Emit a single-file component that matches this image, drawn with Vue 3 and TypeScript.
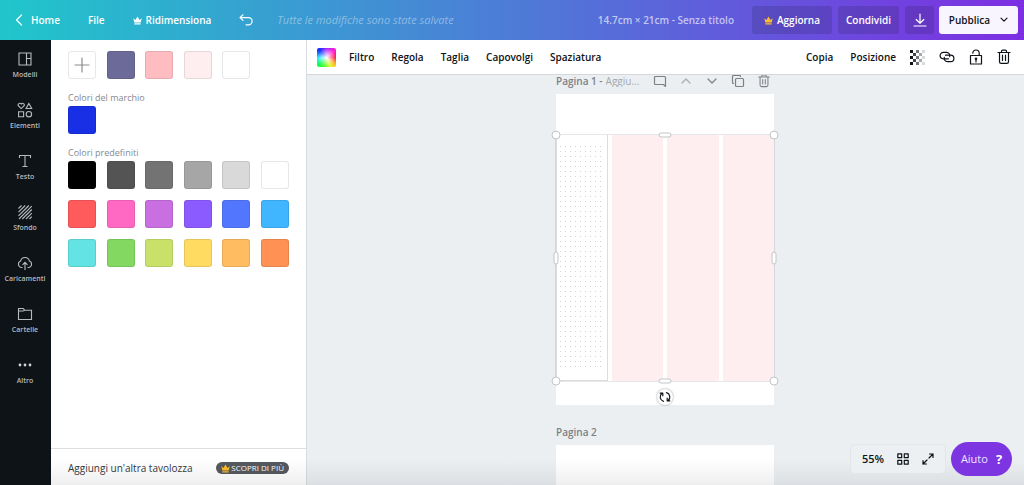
<script setup lang="ts">
interface NavItem {
  label: string
  icon: string
}

const navItems: NavItem[] = [
  { label: 'Modelli', icon: 'layout' },
  { label: 'Elementi', icon: 'shapes' },
  { label: 'Testo', icon: 'text' },
  { label: 'Sfondo', icon: 'stripes' },
  { label: 'Caricamenti', icon: 'cloud' },
  { label: 'Cartelle', icon: 'folder' },
  { label: 'Altro', icon: 'more' },
]

const documentColors: string[] = ['#6c6a98', '#ffbcc1', '#ffeeef', '#ffffff']
const brandColors: string[] = ['#182fe6']
const defaultColors: string[] = [
  '#000000', '#545454', '#737373', '#a6a6a6', '#d9d9d9', '#ffffff',
  '#ff5a5c', '#ff68c3', '#ca6fe2', '#8c5bff', '#5376ff', '#3fb6ff',
  '#64e3e5', '#82d860', '#c9e169', '#ffdb62', '#ffbc60', '#ff9155',
]

const imageTools: string[] = ['Filtro', 'Regola', 'Taglia', 'Capovolgi', 'Spaziatura']
const handles: string[] = ['nw', 'ne', 'sw', 'se', 'n', 's', 'w', 'e']

const checker: { x: number; y: number; o: number }[] = []
for (let row = 0; row < 5; row++) {
  for (let col = 0; col < 5; col++) {
    if ((row + col) % 2 === 0) checker.push({ x: col * 3, y: row * 3, o: 1 - col * 0.21 })
  }
}
</script>

<template>
  <div class="app">
    <header class="topbar">
      <a class="home" href="#">
        <svg width="8" height="12" viewBox="0 0 8 12"><path d="M6.5 1 1.5 6l5 5" class="line" /></svg>
        Home
      </a>
      <button class="file">File</button>
      <button class="resize">
        <svg width="9" height="9" viewBox="0 0 9 9"><path d="M.3 2.2 2.5 4 4.5.5 6.5 4l2.2-1.8-1 4.3H1.3zM1.4 7.2h6.2v1.3H1.4z" fill="currentColor" /></svg>
        Ridimensiona
      </button>
      <button class="undo" aria-label="Annulla">
        <svg width="14" height="12" viewBox="0 0 14 12"><path d="M4 .8 1 3.6l3 2.8M1.2 3.6h8.3a3.6 3.6 0 0 1 0 7.2H7" class="line" /></svg>
      </button>
      <span class="saved">Tutte le modifiche sono state salvate</span>
      <button class="doc-title">14.7cm × 21cm - Senza titolo</button>
      <button class="action upgrade">
        <svg width="9" height="9" viewBox="0 0 9 9"><path d="M.3 2.2 2.5 4 4.5.5 6.5 4l2.2-1.8-1 4.3H1.3zM1.4 7.2h6.2v1.3H1.4z" fill="#fdbc2c" /></svg>
        Aggiorna
      </button>
      <button class="action share">Condividi</button>
      <button class="action download" aria-label="Scarica">
        <svg width="14" height="14" viewBox="0 0 14 14"><path d="M7 1v9M3.2 6.5 7 10.2l3.8-3.7M1 13h12" class="line" /></svg>
      </button>
      <button class="action publish">
        Pubblica
        <svg width="8" height="6" viewBox="0 0 8 6"><path d="m1 1.2 3 3 3-3" class="line" /></svg>
      </button>
    </header>

    <div class="body">
      <nav class="rail">
        <button v-for="item in navItems" :key="item.label" class="rail-item">
          <svg width="16" height="16" viewBox="0 0 16 16" class="rail-icon">
            <path v-if="item.icon === 'layout'" d="M2 2h12v12H2zM9.5 2v12M9.5 7.5H14" />
            <template v-else-if="item.icon === 'shapes'">
              <path d="M4.2 6.6 1.5 4A1.6 1.6 0 0 1 4.2 2a1.6 1.6 0 0 1 2.7 2zM11.9 1.5l2.8 5H9.1zM1.6 9.7h5v5h-5z" />
              <circle cx="11.9" cy="12.2" r="2.7" />
            </template>
            <path v-else-if="item.icon === 'text'" d="M2.5 5V2.5h11V5M8 2.5v11M5.5 13.5h5" />
            <path v-else-if="item.icon === 'stripes'" d="M1.5 4.5l3-3M1.5 8.2l6.7-6.7M1.5 11.9 11.9 1.5M2 15 14.8 2.2M5.3 15l9.5-9.5M9 15l5.8-5.8M12.5 15l2.3-2.3" />
            <path v-else-if="item.icon === 'cloud'" d="M5.5 12.5H4.2A3.4 3.4 0 0 1 3.6 6a4.5 4.5 0 0 1 8.8 0 3.4 3.4 0 0 1-.6 6.5h-1.3M8 15V7.5M5.5 9.8 8 7.3l2.5 2.5" />
            <path v-else-if="item.icon === 'folder'" d="M1.5 13.5v-11h4.8l1.3 1.7h6.9v9.3zM1.5 5h4.8l1.3-.8" />
            <g v-else class="dots">
              <circle cx="3" cy="8" r="1.4" /><circle cx="8" cy="8" r="1.4" /><circle cx="13" cy="8" r="1.4" />
            </g>
          </svg>
          <span>{{ item.label }}</span>
        </button>
      </nav>

      <aside class="panel">
        <div class="palettes">
          <div class="swatches">
            <button class="swatch add" aria-label="Aggiungi colore">
              <svg width="16" height="16" viewBox="0 0 16 16"><path d="M8 1v14M1 8h14" class="line" /></svg>
            </button>
            <button v-for="c in documentColors" :key="c" class="swatch" :style="{ backgroundColor: c }" :aria-label="c"></button>
          </div>
          <h2>Colori del marchio</h2>
          <div class="swatches">
            <button v-for="c in brandColors" :key="c" class="swatch" :style="{ backgroundColor: c }" :aria-label="c"></button>
          </div>
          <h2>Colori predefiniti</h2>
          <div class="swatches">
            <button v-for="c in defaultColors" :key="c" class="swatch" :style="{ backgroundColor: c }" :aria-label="c"></button>
          </div>
        </div>
        <footer class="panel-footer">
          <span>Aggiungi un'altra tavolozza</span>
          <button class="pill">
            <svg width="9" height="9" viewBox="0 0 9 9"><path d="M.3 2.2 2.5 4 4.5.5 6.5 4l2.2-1.8-1 4.3H1.3zM1.4 7.2h6.2v1.3H1.4z" fill="#fdbc2c" /></svg>
            SCOPRI DI PIÙ
          </button>
        </footer>
      </aside>

      <main class="workspace">
        <div class="toolbar">
          <button class="color-picker" aria-label="Colore"></button>
          <button v-for="tool in imageTools" :key="tool">{{ tool }}</button>
          <span class="spacer"></span>
          <button>Copia</button>
          <button>Posizione</button>
          <div class="tool-icons">
            <button aria-label="Trasparenza">
              <svg width="15" height="15" viewBox="0 0 15 15"><rect v-for="(s, i) in checker" :key="i" :x="s.x" :y="s.y" width="3" height="3" fill="#0e1318" :opacity="s.o" /></svg>
            </button>
            <button aria-label="Link">
              <svg width="16" height="12" viewBox="0 0 16 12"><path d="M9.5 7.8H4.3a3.2 3.2 0 0 1 0-6.4h3.4a3.2 3.2 0 0 1 3 4.2M6.5 4.2h5.2a3.2 3.2 0 0 1 0 6.4H8.3a3.2 3.2 0 0 1-3-4.2" class="line" /></svg>
            </button>
            <button aria-label="Blocca">
              <svg width="14" height="16" viewBox="0 0 14 16"><path d="M1.5 6.5h11V15h-11zM3.8 4.2a3.2 3.2 0 0 1 6.4 0v2.3M7 10v3" class="line" /><circle cx="7" cy="9.8" r="1.3" fill="currentColor" /></svg>
            </button>
            <button aria-label="Elimina">
              <svg width="14" height="16" viewBox="0 0 14 16"><path d="M1 3.5h12M4.5 3.2v-.9c0-.7.5-1.2 1.2-1.2h2.6c.7 0 1.2.5 1.2 1.2v.9M2.5 3.7v9c0 1 .7 1.7 1.7 1.7h5.6c1 0 1.7-.7 1.7-1.7v-9M5.5 6.2v5.3M8.5 6.2v5.3" class="line" /></svg>
            </button>
          </div>
        </div>

        <div class="canvas">
          <section class="page-block">
            <div class="page-head">
              <label for="page-title">Pagina 1 -</label>
              <input id="page-title" type="text" placeholder="Aggiu..." />
              <div class="page-tools">
                <button aria-label="Commenta">
                  <svg width="14" height="14" viewBox="0 0 14 14"><path d="M2.500 2.500h9a1 1 0 0 1 1 1v9l-2-2h-8a1 1 0 0 1-1-1v-6a1 1 0 0 1 1-1z" class="line" /></svg>
                </button>
                <button class="faded" aria-label="Sposta su">
                  <svg width="14" height="14" viewBox="0 0 14 14"><path d="m3 9 4-4 4 4" class="line" /></svg>
                </button>
                <button aria-label="Sposta giù">
                  <svg width="14" height="14" viewBox="0 0 14 14"><path d="m3 5 4 4 4-4" class="line" /></svg>
                </button>
                <button aria-label="Duplica pagina">
                  <svg width="14" height="14" viewBox="0 0 14 14"><path d="M5.500 4.500h6a1 1 0 0 1 1 1v6a1 1 0 0 1-1 1h-6a1 1 0 0 1-1-1v-6a1 1 0 0 1 1-1zM2.500 9.500a1 1 0 0 1-1-1v-6a1 1 0 0 1 1-1h6a1 1 0 0 1 1 1" class="line" /></svg>
                </button>
                <button aria-label="Elimina pagina">
                  <svg width="14" height="14" viewBox="0 0 14 16"><path d="M1 3.5h12M4.5 3.2v-.9c0-.7.5-1.2 1.2-1.2h2.6c.7 0 1.2.5 1.2 1.2v.9M2.5 3.7v9c0 1 .7 1.7 1.7 1.7h5.6c1 0 1.7-.7 1.7-1.7v-9M5.5 6.2v5.3M8.5 6.2v5.3" class="line" /></svg>
                </button>
              </div>
            </div>
            <div class="page first">
              <div class="selection">
                <div class="dotted"><div class="dot-grid"></div></div>
                <div class="stripe"></div>
                <div class="stripe"></div>
                <div class="stripe"></div>
                <span v-for="h in handles" :key="h" class="handle" :class="h"></span>
                <button class="rotate" aria-label="Ruota">
                  <svg width="12" height="12" viewBox="0 0 12 12"><path d="M4.5 10.3A4.5 4.5 0 0 1 2.8 2.500M1.2 2.2h2.6v2.6M7.5 1.7a4.5 4.5 0 0 1 1.7 7.8M10.8 9.8H8.2V7.2" class="line" /></svg>
                </button>
              </div>
            </div>
          </section>
          <section class="page-block">
            <div class="page-head">Pagina 2</div>
            <div class="page second"></div>
          </section>
        </div>
      </main>
    </div>

    <div class="shade"></div>

    <div class="floating">
      <div class="zoom-bar">
        <button>55%</button>
        <button aria-label="Vista griglia">
          <svg width="12" height="12" viewBox="0 0 12 12"><path d="M.8.8h3.9v3.9H.8zM7.3.8h3.9v3.9H7.3zM.8 7.3h3.9v3.9H.8zM7.3 7.3h3.9v3.9H7.3z" class="line" /></svg>
        </button>
        <button aria-label="Schermo intero">
          <svg width="12" height="12" viewBox="0 0 12 12"><path d="M7.5 1H11v3.500M11 1 7 5M4.500 11H1V7.500M1 11l4-4" class="line" /></svg>
        </button>
      </div>
      <button class="help">Aiuto <b>?</b></button>
    </div>
  </div>
</template>

<style>
body {
  margin: 0;
  overflow: hidden;
}
</style>

<style scoped>
.app {
  position: relative;
  display: flex;
  flex-direction: column;
  height: 100vh;
  overflow: hidden;
  font-family: "Open Sans", "Noto Sans", sans-serif;
  font-size: 10px;
  font-weight: 600;
  line-height: 16px;
  color: #0e1318;
}
button {
  display: flex;
  align-items: center;
  justify-content: center;
  margin: 0;
  padding: 0;
  border: 0;
  background: none;
  color: inherit;
  font: inherit;
  white-space: nowrap;
  cursor: pointer;
}
svg {
  display: block;
  flex: none;
}
.line {
  fill: none;
  stroke: currentColor;
  stroke-width: 1.2;
  stroke-linecap: round;
  stroke-linejoin: round;
}
.topbar {
  display: flex;
  align-items: center;
  flex: none;
  height: 40px;
  box-sizing: border-box;
  padding: 0 6px 0 15px;
  background: linear-gradient(90deg, #20c6cb, #4b7fd6 48%, #6259dc 72%, #7d2fe2);
  color: #fff;
}
.home {
  display: flex;
  align-items: center;
  gap: 8px;
  color: inherit;
  text-decoration: none;
}
.file {
  margin-left: 28px;
}
.resize {
  gap: 4px;
  margin-left: 28px;
}
.undo {
  margin-left: 28px;
}
.saved {
  margin-left: 24px;
  font-size: 11px;
  font-style: italic;
  font-weight: 400;
  color: rgba(255, 255, 255, 0.4);
  white-space: nowrap;
}
.doc-title {
  margin: 0 18px 0 auto;
  color: rgba(255, 255, 255, 0.65);
}
.action {
  height: 28px;
  border-radius: 3px;
  background: rgba(14, 19, 24, 0.15);
}
.upgrade {
  gap: 4px;
  width: 80px;
}
.share {
  width: 61px;
  margin-left: 6px;
}
.download {
  width: 29px;
  margin-left: 6px;
}
.publish {
  gap: 10px;
  width: 79px;
  margin-left: 5px;
  background: #f9f5ff;
  color: #0e1318;
}
.body {
  display: flex;
  flex: 1;
  min-height: 0;
}
.rail {
  display: flex;
  flex: none;
  flex-direction: column;
  box-sizing: border-box;
  width: 51px;
  padding-right: 1px;
  background: #0e1318;
}
.rail-item {
  flex-direction: column;
  gap: 3px;
  height: 51px;
  color: #b8babc;
  font-size: 7px;
  line-height: 10px;
}
.rail-icon {
  fill: none;
  stroke: #b8babc;
  stroke-width: 1.1;
}
.dots {
  fill: #d0d2d4;
  stroke: none;
}
.panel {
  display: flex;
  flex: none;
  flex-direction: column;
  z-index: 1;
  width: 255px;
  background: #fff;
  box-shadow: 1px 0 0 #d9dcdf;
}
.palettes {
  flex: 1;
  padding: 11px 17px 0;
}
.swatches {
  display: grid;
  grid-template-columns: repeat(6, 28px);
  justify-content: space-between;
  row-gap: 11px;
}
.swatch {
  box-sizing: border-box;
  height: 28px;
  border: 1px solid rgba(14, 19, 24, 0.1);
  border-radius: 3px;
}
.add {
  color: #8b8d90;
}
h2 {
  margin: 11px 0 1px;
  color: #85898d;
  font-size: 9px;
  font-weight: 400;
  line-height: 15px;
}
.panel-footer {
  display: flex;
  align-items: center;
  justify-content: space-between;
  height: 37px;
  padding: 2px 17px 0;
  box-sizing: border-box;
  border-top: 1px solid #dddfe1;
  font-weight: 400;
  color: #34383d;
  white-space: nowrap;
}
.pill {
  gap: 1px;
  height: 12px;
  padding: 0 5px;
  border-radius: 6px;
  background: #55585c;
  color: #fff;
  font-size: 8px;
  line-height: 12px;
}
.workspace {
  display: flex;
  flex: 1;
  flex-direction: column;
  min-width: 0;
  background: #ebeff2;
}
.toolbar {
  display: flex;
  align-items: center;
  flex: none;
  gap: 17px;
  height: 34px;
  padding: 0 13px 0 11px;
  border-bottom: 1px solid #d6d9dc;
  background: #fff;
}
.color-picker {
  width: 19px;
  height: 19px;
  margin-right: -4px;
  border-radius: 2px;
  background:
    radial-gradient(circle closest-side, #fff, rgba(255, 255, 255, 0)),
    conic-gradient(from 0deg, #a020ff, #ff20d8 45deg, #ff1048 90deg, #ffb030 125deg, #e0ff20 155deg, #58ff20 190deg, #10ff50 225deg, #10f0ff 265deg, #1030ff 315deg, #a020ff);
}
.spacer {
  flex: 1;
}
.tool-icons {
  display: flex;
  align-items: center;
  gap: 14px;
  margin-left: -3px;
}
.canvas {
  display: flex;
  flex: 1;
  flex-direction: column;
  align-items: center;
  gap: 21px;
  min-height: 0;
  overflow: hidden;
}
.page-block {
  flex: none;
  width: 218px;
}
.page-head {
  display: flex;
  align-items: center;
  height: 12px;
  margin-bottom: 7px;
  color: #7d8185;
  line-height: 12px;
  white-space: nowrap;
}
.page-head input {
  width: 44px;
  height: 12px;
  min-width: 0;
  margin-left: 3px;
  padding: 0;
  border: 0;
  outline: 0;
  background: none;
  font: inherit;
  font-weight: 400;
}
.page-head input::placeholder {
  color: #a4a8ac;
}
.page-tools {
  display: flex;
  gap: 12px;
  margin-left: auto;
  margin-right: 3px;
}
.faded {
  opacity: 0.6;
}
.page {
  background: #fff;
}
.first {
  padding: 41px 0 24px;
}
.second {
  height: 311px;
}
.selection {
  position: relative;
  display: grid;
  grid-template-columns: repeat(4, 1fr);
  column-gap: 4px;
  height: 246px;
  box-shadow: 0 0 0 1px rgba(14, 19, 24, 0.1);
}
.dotted {
  padding: 10px 3px 0 2px;
  border: 1px solid #dadcde;
  border-width: 0 1px 1px;
}
.dot-grid {
  height: 225px;
  background: conic-gradient(from 270deg at 1px 1px, #d0d2d4 90deg, rgba(255, 255, 255, 0) 0) 1px 1px / 5px 5px;
}
.stripe {
  background: #ffeeef;
}
.handle {
  position: absolute;
  width: 9px;
  height: 9px;
  box-sizing: border-box;
  border: 1px solid #c2c5c8;
  border-radius: 5px;
  background: #fff;
  transform: translate(-50%, -50%);
}
.nw { left: 0; top: 0; }
.ne { left: 100%; top: 0; }
.sw { left: 0; top: 100%; }
.se { left: 100%; top: 100%; }
.n { left: 50%; top: 0; }
.s { left: 50%; top: 100%; }
.w { left: 0; top: 50%; }
.e { left: 100%; top: 50%; }
.n, .s {
  width: 13px;
  height: 5px;
}
.w, .e {
  width: 5px;
  height: 13px;
}
.rotate {
  position: absolute;
  left: 50%;
  top: 100%;
  width: 16px;
  height: 16px;
  margin: 8px 0 0 -8px;
  border-radius: 8px;
  background: #fff;
  box-shadow: 0 0 2px rgba(14, 19, 24, 0.5);
}
.shade {
  position: absolute;
  right: 0;
  bottom: 0;
  left: 51px;
  z-index: 2;
  height: 26px;
  background: linear-gradient(rgba(14, 19, 24, 0), rgba(14, 19, 24, 0.07));
  pointer-events: none;
}
.floating {
  position: absolute;
  right: 12px;
  bottom: 9px;
  z-index: 3;
  display: flex;
  align-items: center;
  gap: 5px;
  font-size: 11px;
}
.zoom-bar {
  display: flex;
  align-items: center;
  justify-content: space-between;
  box-sizing: border-box;
  width: 96px;
  height: 30px;
  padding: 0 11px;
  border: 1px solid #e2e6e9;
  border-radius: 5px;
  background: #edf0f3;
}
.help {
  gap: 8px;
  width: 61px;
  height: 34px;
  border-radius: 17px;
  background: #7d35e1;
  color: #f0e6ff;
  font-weight: 400;
}
.help b {
  color: #fff;
  font-size: 13px;
}
</style>
